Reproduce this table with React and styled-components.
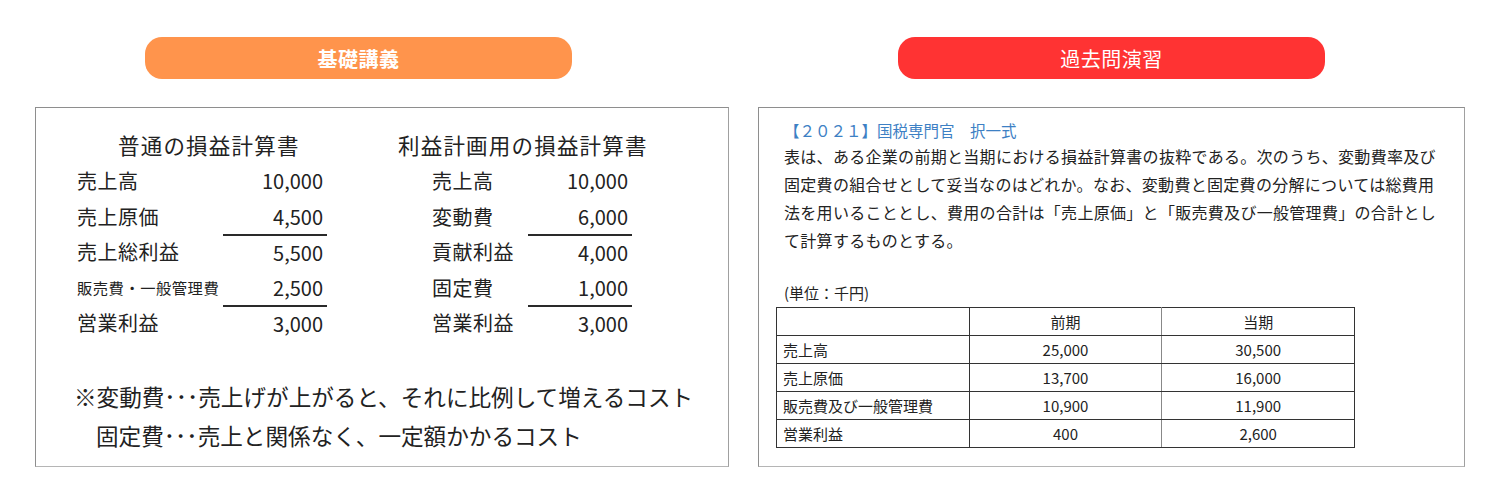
import styled, { createGlobalStyle } from 'styled-components';

const GlobalStyle = createGlobalStyle`
  body {
    margin: 0;
    background: #fff;
    font-family: "Noto Sans CJK JP", "Noto Sans", sans-serif;
    color: #222;
  }
`;

const Page = styled.div`
  display: flex;
  gap: 29px;
  padding: 37px 0 0 35px;
`;

const Column = styled.section`
  width: ${({ width }) => width}px;
  display: flex;
  flex-direction: column;
`;

const Pill = styled.div`
  width: 427px;
  height: 42px;
  margin-left: ${({ offset }) => offset}px;
  border-radius: 17px;
  background: ${({ color }) => color};
  color: #fff;
  font-size: 20px;
  font-weight: ${({ bold }) => (bold ? 700 : 400)};
  display: flex;
  align-items: center;
  justify-content: center;
  letter-spacing: 0.5px;
`;

const Panel = styled.div`
  margin-top: 28px;
  height: 360px;
  box-sizing: border-box;
  border: 1px solid #8e8e8e;
  border-bottom-color: #b5b5b5;
  border-right-color: #a0a0a0;
`;

const LecturePanel = styled(Panel)`
  padding: 19px 0 0 41px;
`;

const Statements = styled.div`
  display: flex;
  gap: 71px;
`;

const Statement = styled.div`
  display: flex;
  flex-direction: column;
`;

const StatementTitle = styled.div`
  font-size: 21.5px;
  line-height: 36px;
  margin-left: ${({ indent }) => indent}px;
  letter-spacing: 1.2px;
`;

const Rows = styled.div`
  display: grid;
  grid-template-columns: ${({ labelWidth }) => labelWidth}px 104px;
  margin-left: ${({ indent }) => indent}px;
`;

const Label = styled.div`
  font-size: ${({ small }) => (small ? 15.3 : 20)}px;
  line-height: 35.5px;
  height: 35.5px;
  letter-spacing: 0.5px;
  white-space: nowrap;
`;

const Value = styled.div`
  font-size: 20px;
  height: 35.5px;
  text-align: right;
  padding-right: 4px;
  box-sizing: border-box;
  border-top: ${({ ruled }) => (ruled ? '2px solid #2a2a2a' : 'none')};
  line-height: ${({ ruled }) => (ruled ? 33.5 : 35.5)}px;
`;

const Notes = styled.div`
  margin-top: 36px;
  margin-left: -3px;
  font-size: 22.6px;
  line-height: 39px;
`;

const NoteLine = styled.div`
  padding-left: ${({ indent }) => (indent ? 22 : 0)}px;
`;

const ExercisePanel = styled(Panel)`
  padding: 10px 0 0 25px;
`;

const ExamTitle = styled.div`
  color: #3d80c4;
  font-size: 15.5px;
  line-height: 24px;
`;

const Question = styled.p`
  margin: 0;
  font-size: 16px;
  line-height: 28px;
  letter-spacing: 0.3px;
`;

const Unit = styled.div`
  margin-top: 28px;
  font-size: 15px;
  line-height: 22px;
`;

const Table = styled.table`
  margin: 3px 0 0 -8px;
  width: 579px;
  border-collapse: collapse;
  font-size: 15px;
`;

const Cell = styled.td`
  height: 27px;
  padding: 0 6px;
  border: 1px solid #333;
  border-right-color: ${({ soft }) => (soft ? '#888' : '#333')};
  text-align: ${({ align }) => align || 'center'};
  width: 33.3%;
`;

const basic = [
  { label: '売上高', value: '10,000' },
  { label: '売上原価', value: '4,500' },
  { label: '売上総利益', value: '5,500', ruled: true },
  { label: '販売費・一般管理費', value: '2,500', small: true },
  { label: '営業利益', value: '3,000', ruled: true },
];

const planning = [
  { label: '売上高', value: '10,000' },
  { label: '変動費', value: '6,000' },
  { label: '貢献利益', value: '4,000', ruled: true },
  { label: '固定費', value: '1,000' },
  { label: '営業利益', value: '3,000', ruled: true },
];

const tableRows = [
  ['売上高', '25,000', '30,500'],
  ['売上原価', '13,700', '16,000'],
  ['販売費及び一般管理費', '10,900', '11,900'],
  ['営業利益', '400', '2,600'],
];

const StatementRows = ({ items, labelWidth, indent }) => (
  <Rows labelWidth={labelWidth} indent={indent}>
    {items.map((item) => [
      <Label key={item.label + '-l'} small={item.small}>
        {item.label}
      </Label>,
      <Value key={item.label + '-v'} ruled={item.ruled}>
        {item.value}
      </Value>,
    ])}
  </Rows>
);

const App = () => (
  <>
    <GlobalStyle />
    <Page>
      <Column width={694}>
        <Pill offset={110} color="#ff944c" bold>
          基礎講義
        </Pill>
        <LecturePanel>
          <Statements>
            <Statement>
              <StatementTitle indent={41}>普通の損益計算書</StatementTitle>
              <StatementRows items={basic} labelWidth={146} indent={0} />
            </Statement>
            <Statement>
              <StatementTitle indent={0}>利益計画用の損益計算書</StatementTitle>
              <StatementRows items={planning} labelWidth={96} indent={34} />
            </Statement>
          </Statements>
          <Notes>
            <NoteLine>※変動費･･･売上げが上がると、それに比例して増えるコスト</NoteLine>
            <NoteLine indent>固定費･･･売上と関係なく、一定額かかるコスト</NoteLine>
          </Notes>
        </LecturePanel>
      </Column>
      <Column width={707}>
        <Pill offset={140} color="#ff3333">
          過去問演習
        </Pill>
        <ExercisePanel>
          <ExamTitle>【２０２１】国税専門官　択一式</ExamTitle>
          <Question>
            表は、ある企業の前期と当期における損益計算書の抜粋である。次のうち、変動費率及び
            <br />
            固定費の組合せとして妥当なのはどれか。なお、変動費と固定費の分解については総費用
            <br />
            法を用いることとし、費用の合計は「売上原価」と「販売費及び一般管理費」の合計とし
            <br />
            て計算するものとする。
          </Question>
          <Unit>(単位：千円)</Unit>
          <Table>
            <tbody>
              <tr>
                <Cell />
                <Cell soft>前期</Cell>
                <Cell>当期</Cell>
              </tr>
              {tableRows.map(([label, prev, curr]) => (
                <tr key={label}>
                  <Cell align="left">{label}</Cell>
                  <Cell soft>{prev}</Cell>
                  <Cell>{curr}</Cell>
                </tr>
              ))}
            </tbody>
          </Table>
        </ExercisePanel>
      </Column>
    </Page>
  </>
);

export default App;
